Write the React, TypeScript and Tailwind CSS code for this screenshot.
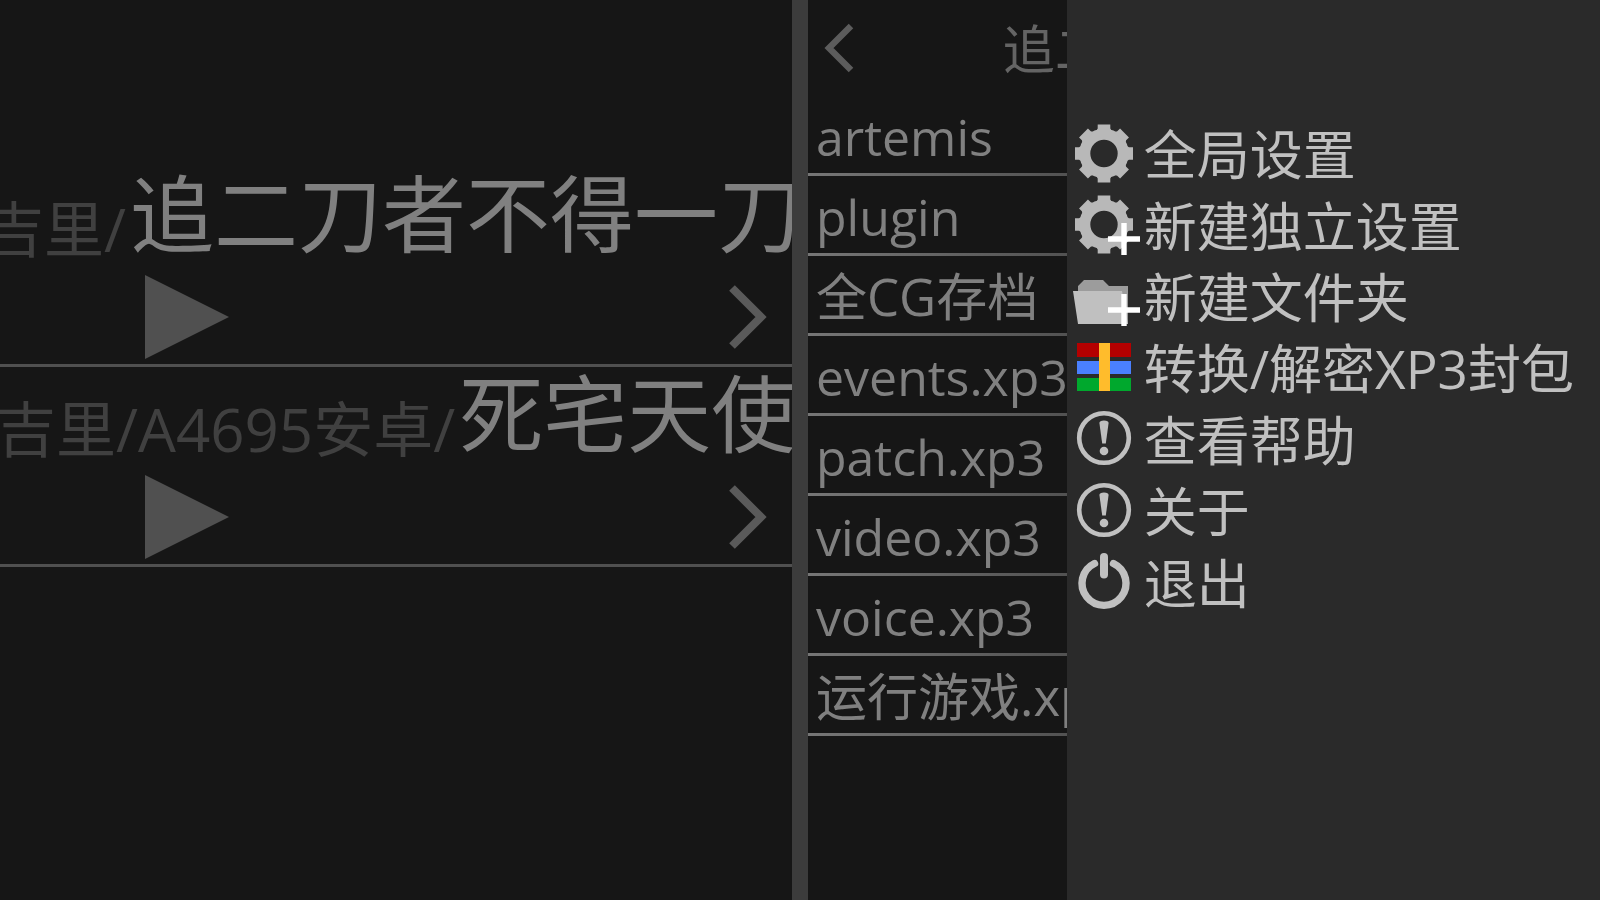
import type { ReactNode } from "react"

interface RecentGame {
  path: string
  title: string
  offset: string
}

interface FileEntry {
  name: string
  size: string
}

interface MenuItem {
  label: string
  icon: ReactNode
}

const recentGames: RecentGame[] = [
  { path: "吉里/", title: "追二刀者不得一刀", offset: "-ml-4" },
  { path: "吉里/A4695安卓/", title: "死宅天使", offset: "-ml-1" },
]

const files: FileEntry[] = [
  { name: "artemis", size: "text-[50px]" },
  { name: "plugin", size: "text-[50px]" },
  { name: "全CG存档", size: "text-[51px]" },
  { name: "events.xp3", size: "text-[50px]" },
  { name: "patch.xp3", size: "text-[50px]" },
  { name: "video.xp3", size: "text-[50px]" },
  { name: "voice.xp3", size: "text-[50px]" },
  { name: "运行游戏.xp3", size: "text-[51px]" },
]

const teeth = [0, 45, 90, 135, 180, 225, 270, 315]

function GearIcon({ plus = false }: { plus?: boolean }) {
  return (
    <svg viewBox="0 0 64 64" className="size-16 overflow-visible" aria-hidden="true">
      <circle cx="32" cy="32.5" r="19.2" fill="none" stroke="#b8b8b8" strokeWidth="11" />
      {teeth.map((angle) => (
        <path
          key={angle}
          d="M25.7 3.5H38.3V7.5L40 10.5H24L25.7 7.5Z"
          fill="#b8b8b8"
          transform={`rotate(${angle} 32 32.5)`}
        />
      ))}
      {plus && <path d="M52 31V63M36 47H68" stroke="#ffffff" strokeWidth="5.4" />}
    </svg>
  )
}

function FolderIcon() {
  return (
    <svg viewBox="0 0 64 64" className="size-16 overflow-visible" aria-hidden="true">
      <path d="M6 22L12 16H31L37 22H56V60H6Z" fill="#9c9c9c" />
      <path d="M1 27H50L56 60H6Z" fill="#c0c0c0" />
      <path d="M52 30V62M36 46H68" stroke="#ffffff" strokeWidth="5.4" />
    </svg>
  )
}

function ArchiveIcon() {
  return (
    <svg viewBox="0 0 64 64" className="size-16" aria-hidden="true">
      <path d="M5 8H59V22H5Z" fill="#b40000" />
      <path d="M5 26H59V39H5Z" fill="#4a80ff" />
      <path d="M5 43H59V56H5Z" fill="#00a82d" />
      <path d="M27 8H38V56H27Z" fill="#ffbc2c" />
    </svg>
  )
}

function AlertIcon() {
  return (
    <svg viewBox="0 0 64 64" className="size-16" aria-hidden="true">
      <circle cx="32" cy="32" r="24.8" fill="none" stroke="#c0c0c0" strokeWidth="4.6" />
      <path d="M27.4 17Q27.4 14.4 32 14.4T36.6 17L33.8 37.5H30.2Z" fill="#c0c0c0" />
      <circle cx="32" cy="45" r="4.3" fill="#c0c0c0" />
    </svg>
  )
}

function PowerIcon() {
  return (
    <svg viewBox="0 0 64 64" className="size-16" aria-hidden="true">
      <path
        d="M22.5 14.5A22 22 0 1 0 41.5 14.5"
        fill="none"
        stroke="#c0c0c0"
        strokeWidth="7.4"
        strokeLinecap="round"
      />
      <path d="M32 8V25.5" stroke="#c0c0c0" strokeWidth="8" strokeLinecap="round" />
    </svg>
  )
}

const menuItems: MenuItem[] = [
  { label: "全局设置", icon: <GearIcon /> },
  { label: "新建独立设置", icon: <GearIcon plus /> },
  { label: "新建文件夹", icon: <FolderIcon /> },
  { label: "转换/解密XP3封包", icon: <ArchiveIcon /> },
  { label: "查看帮助", icon: <AlertIcon /> },
  { label: "关于", icon: <AlertIcon /> },
  { label: "退出", icon: <PowerIcon /> },
]

export default function App() {
  return (
    <div className="flex min-h-screen overflow-hidden bg-[#161616] font-['Open_Sans','Noto_Sans_CJK_SC',sans-serif] whitespace-nowrap text-[#808080]">
      <main className="w-[49.5%] shrink-0 overflow-hidden pt-[167px]">
        {recentGames.map((game) => (
          <section key={game.title} className="h-[200px] border-b-3 border-[#505050]">
            <div className={`flex h-[100px] items-start ${game.offset}`}>
              <span className="text-[60px] leading-[124px] text-[#404040]">{game.path}</span>
              <h2 className="pl-1 text-[84px] leading-[94px]">{game.title}</h2>
            </div>
            <div className="flex h-[100px] items-center justify-between pr-[25px] pl-[145px]">
              <button aria-label="Play">
                <svg viewBox="0 0 84 84" className="size-[84px]" aria-hidden="true">
                  <path d="M0 0L84 42L0 84Z" fill="#505050" />
                </svg>
              </button>
              <button aria-label="Open">
                <svg viewBox="0 0 38 64" className="h-16 w-[38px]" aria-hidden="true">
                  <path d="M3 3L32 32L3 61" fill="none" stroke="#5a5a5a" strokeWidth="8" />
                </svg>
              </button>
            </div>
          </section>
        ))}
      </main>

      <div className="w-4 shrink-0 bg-[#3c3c3c]" />

      <section className="min-w-0 flex-1 overflow-hidden">
        <header className="flex h-24 items-center justify-between overflow-hidden pl-4">
          <button aria-label="Back">
            <svg viewBox="0 0 30 50" className="h-[50px] w-[30px]" aria-hidden="true">
              <path d="M27 3L5 25L27 47" fill="none" stroke="#5c5c5c" strokeWidth="6.4" />
            </svg>
          </button>
          <h1 className="-mr-10 pt-0.5 text-[52px] leading-none text-[#646464]">追二</h1>
        </header>
        <ul>
          {files.map((file) => (
            <li key={file.name} className="flex h-20 flex-col">
              <button className={`flex-1 pt-1 pl-2 text-left leading-none ${file.size}`}>{file.name}</button>
              <div className="h-[3px] bg-linear-to-r from-[#767676] to-[#525252]" />
            </li>
          ))}
        </ul>
      </section>

      <nav className="w-1/3 shrink-0 bg-[#2a2a2a] pt-[117px]">
        <ul className="grid h-[500px] grid-rows-7 text-[53px] leading-none text-[#c0c0c0]">
          {menuItems.map((item) => (
            <li key={item.label}>
              <button className="flex h-full w-full items-center gap-2 pl-[5px]">
                {item.icon}
                <span className="pt-1">{item.label}</span>
              </button>
            </li>
          ))}
        </ul>
      </nav>
    </div>
  )
}
